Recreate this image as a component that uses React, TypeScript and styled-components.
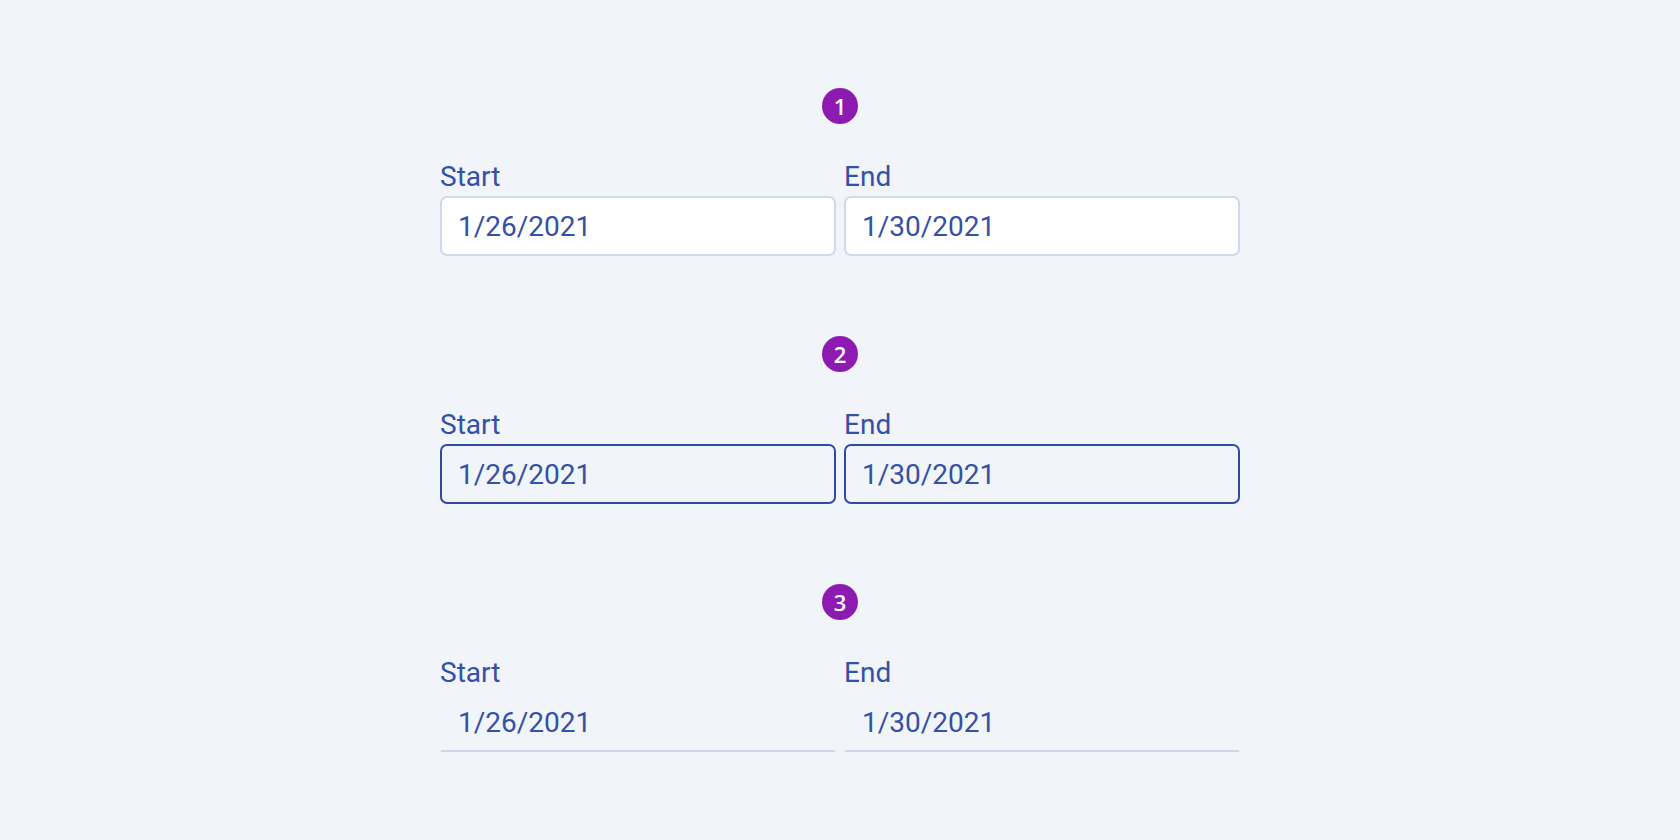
import React from "react";
import styled, { createGlobalStyle } from "styled-components";

const Global = createGlobalStyle`
  html, body { margin: 0; padding: 0; background: #f1f4f9; }
  body { font-family: Roboto, "Noto Sans", sans-serif; }
  * { box-sizing: border-box; }
`;

const Page = styled.main`
  width: 1680px;
  height: 840px;
  background: #f1f4f9;
  display: flex;
  flex-direction: column;
  align-items: center;
  padding-top: 88px;
  gap: 80px;
`;

const Section = styled.section`
  width: 800px;
  display: flex;
  flex-direction: column;
  align-items: center;
  gap: 37px;
`;

const Badge = styled.div`
  width: 36px;
  height: 36px;
  border-radius: 50%;
  background: #8e1bb1;
  color: #ffffff;
  font-family: "Open Sans", "Noto Sans", sans-serif;
  font-size: 22px;
  font-weight: 600;
  display: flex;
  align-items: center;
  justify-content: center;
  line-height: 1;
`;

const Row = styled.div`
  width: 100%;
  display: grid;
  grid-template-columns: 1fr 1fr;
  gap: 8px;
`;

const Field = styled.div`
  display: flex;
  flex-direction: column;
  gap: 3px;
`;

const Label = styled.label`
  font-family: Roboto, sans-serif;
  font-size: 28px;
  line-height: 32px;
  color: #3451a6;
`;

type Variant = "default" | "focused" | "underline";

const Box = styled.div<{ $variant: Variant }>`
  height: 60px;
  display: flex;
  align-items: center;
  padding: 0 16px;
  font-family: Roboto, sans-serif;
  font-size: 28px;
  color: #3451a6;
  border-radius: ${(p) => (p.$variant === "underline" ? "0" : "7px")};
  background: ${(p) => (p.$variant === "default" ? "#ffffff" : "transparent")};
  border: 2px solid
    ${(p) =>
      p.$variant === "default"
        ? "#d1d9ec"
        : p.$variant === "focused"
        ? "#2f4ca3"
        : "transparent"};
  border-bottom-color: ${(p) =>
    p.$variant === "underline" ? "#cfd6e9" : undefined};
`;

const sections: { n: number; variant: Variant }[] = [
  { n: 1, variant: "default" },
  { n: 2, variant: "focused" },
  { n: 3, variant: "underline" },
];

export default function App() {
  return (
    <>
      <Global />
      <Page>
        {sections.map((s) => (
          <Section key={s.n}>
            <Badge>{s.n}</Badge>
            <Row>
              <Field>
                <Label>Start</Label>
                <Box $variant={s.variant}>1/26/2021</Box>
              </Field>
              <Field>
                <Label>End</Label>
                <Box $variant={s.variant}>1/30/2021</Box>
              </Field>
            </Row>
          </Section>
        ))}
      </Page>
    </>
  );
}
